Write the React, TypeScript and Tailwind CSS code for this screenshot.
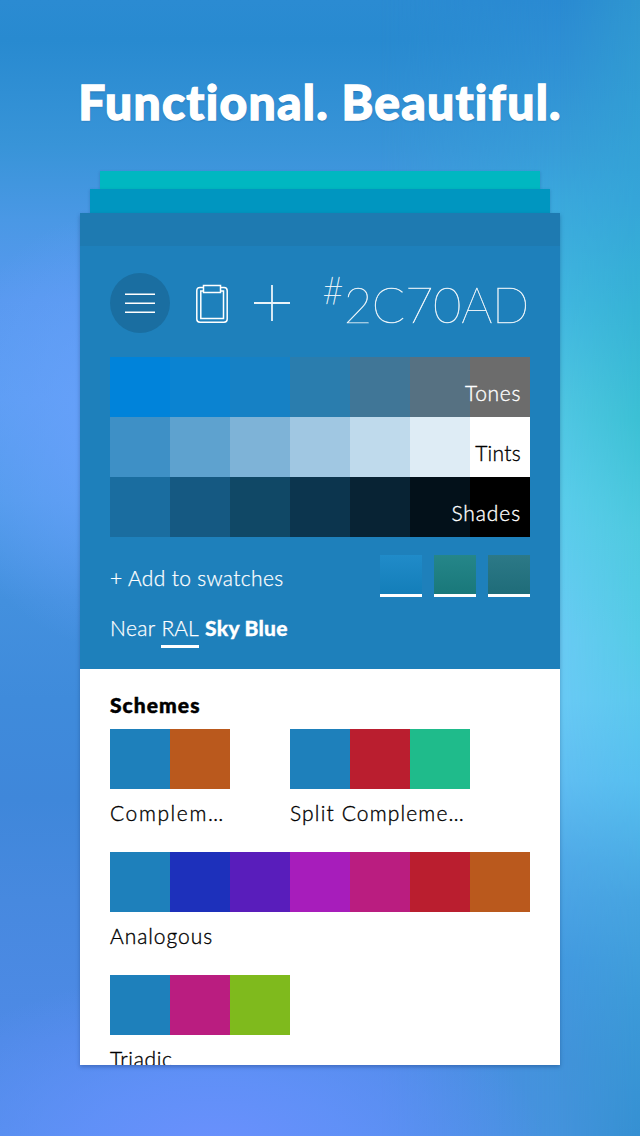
import type { ReactNode } from "react";

const tones = ["bg-[#0083da]", "bg-[#0b83d1]", "bg-[#1681c5]", "bg-[#2a7dae]", "bg-[#407697]", "bg-[#567182]", "bg-[#6c6c6c]"];
const tints = ["bg-[#3e90c6]", "bg-[#5ea2cf]", "bg-[#7eb3d7]", "bg-[#a0c7e2]", "bg-[#bfdaec]", "bg-[#deecf5]", "bg-white"];
const shades = ["bg-[#1a6da0]", "bg-[#155982]", "bg-[#104866]", "bg-[#0c354e]", "bg-[#082334]", "bg-[#03111a]", "bg-black"];

function Backdrop() {
  return (
    <div className="absolute inset-0 -z-10 bg-[linear-gradient(180deg,#2b8bd2_0px,#288ad0_40px,#3894d8_145px,#4a98e5_220px,#5899ef_300px,#5b9df2_400px,#519bea_500px,#4390de_600px,#3f8bdb_700px,#3f87da_800px,#4789df_900px,#4e8ae6_1040px,#4f8de8_1136px)]">
      <div className="absolute inset-0 bg-[radial-gradient(180px_220px_at_120px_430px,#68a1fb_0%,transparent_100%)]" />
      <div className="absolute inset-0 bg-[linear-gradient(180deg,#2a8ad2_0px,#2f90d4_60px,#379dd8_150px,#3aa8dc_200px,#40b6df_300px,#4ec5e2_400px,#5acdeb_500px,#69cbf4_640px,#69caf5_700px,#60bef2_780px,#50aae8_860px,#439ae0_960px,#4293da_1060px,#4493dc_1136px)] [mask-image:linear-gradient(90deg,transparent_380px,black_560px)]" />
      <div className="absolute inset-0 bg-[linear-gradient(180deg,#2f96d0_0px,#35a5d8_200px,#36b3d5_310px,#3cc0d4_420px,#4ec9df_530px,#55cbe6_640px,#5bc8ed_700px,#57bfef_780px,#46a4e0_900px,#3c9ad8_1000px,#3590d2_1136px)] [mask-image:linear-gradient(90deg,transparent_560px,black_640px)]" />
      <div className="absolute inset-0 bg-[radial-gradient(330px_180px_at_215px_1150px,#6a90fd_0%,#6491fbcc_40%,transparent_100%)]" />
    </div>
  );
}

function Strip({ colors }: { colors: string[] }) {
  return (
    <div className="flex h-15">
      {colors.map((c) => (
        <div key={c} className={`h-15 w-15 ${c}`} />
      ))}
    </div>
  );
}

function Ramp({ colors, label, text }: { colors: string[]; label: string; text: string }) {
  return (
    <div className="relative">
      <Strip colors={colors} />
      <span className={`absolute top-[22px] right-[9px] text-[21px] leading-7 font-light ${text}`}>{label}</span>
    </div>
  );
}

function Scheme({ colors, children, spacing }: { colors: string[]; children: ReactNode; spacing: string }) {
  return (
    <div className="h-[123px]">
      <Strip colors={colors} />
      <p className={`mt-[10px] whitespace-nowrap text-[21px] leading-7 font-light text-black [-webkit-text-stroke:0.35px_black] ${spacing}`}>{children}</p>
    </div>
  );
}

export default function App() {
  return (
    <main className="relative isolate flex h-[1136px] w-[640px] flex-col items-center overflow-hidden font-['Lato','Noto_Sans',sans-serif]">
      <Backdrop />
      <h1 className="mt-[72px] h-[99px] whitespace-nowrap text-[48px] leading-[60px] font-black tracking-[1.25px] text-white [-webkit-text-stroke:1.3px_white] [text-shadow:0_1px_2px_rgba(0,40,90,0.35)]">
        Functional. Beautiful.
      </h1>
      <div className="h-[18px] w-[440px] bg-[#00b7c1] shadow-[0_1px_3px_rgba(0,30,80,0.2)]" />
      <div className="h-6 w-[460px] bg-[#0096c0] shadow-[0_1px_3px_rgba(0,30,80,0.2)]" />
      <section className="h-[852px] w-[480px] shrink-0 bg-white shadow-[0_2px_4px_rgba(0,30,80,0.3)]">
        <div className="h-full overflow-hidden">
          <div className="h-[456px] bg-[#1e80bb]">
            <div className="h-[33px] bg-[#1e7ab1]" />
            <div className="px-[30px] pt-[27px]">
              <header className="flex h-[84px] items-start">
                <button className="flex h-15 w-15 items-center justify-center rounded-full bg-[#1a6ea1]">
                  <svg width="30" height="22" viewBox="0 0 30 22" fill="none" stroke="white" strokeWidth="1.5">
                    <path d="M0 2.25h30M0 11.25h30M0 20.25h30" />
                  </svg>
                </button>
                <svg className="mt-[11px] ml-[26px]" width="32" height="40" viewBox="0 0 32 40" fill="none" stroke="white" strokeWidth="1.5">
                  <path d="M7.5 3.5H4Q.8 3.5 .8 6.7V35.3Q.8 38.2 4 38.2H28Q31.2 38.2 31.2 35.3V6.7Q31.2 3.5 28 3.5H24.5" />
                  <path d="M7.5 7H4.8V34.5H27.5V7H24.5" />
                  <path d="M7.5 1.5H24.5V8.5H7.5z" />
                </svg>
                <svg className="mt-3 ml-[26px]" width="36" height="36" viewBox="0 0 36 36" fill="none" stroke="white" strokeOpacity=".9" strokeWidth="1.8">
                  <path d="M18 0V36M0 18H36" />
                </svg>
                <div className="ml-auto flex items-start font-thin whitespace-nowrap text-white [-webkit-text-stroke:0.5px_rgba(255,255,255,0.7)]">
                  <span className="-mt-[3px] text-[37px] leading-[40px]">#</span>
                  <span className="mt-px mr-[1px] text-[49px] leading-[60px] tracking-[-0.3px]">2C70AD</span>
                </div>
              </header>
              <div>
                <Ramp colors={tones} label="Tones" text="text-white tracking-[0.65px] [-webkit-text-stroke:0.35px_white]" />
                <Ramp colors={tints} label="Tints" text="text-black tracking-[0.3px] [-webkit-text-stroke:0.35px_black]" />
                <Ramp colors={shades} label="Shades" text="text-white tracking-[0.9px] [-webkit-text-stroke:0.35px_white]" />
              </div>
              <div className="flex justify-between pt-[18px] text-[21px] leading-7 font-light text-white [-webkit-text-stroke:0.25px_white]">
                <span className="mt-[9px] tracking-[0.35px]">+ Add to swatches</span>
                <div className="flex gap-3">
                  <div className="h-[42px] w-[42px] border-b-3 border-white bg-linear-to-b from-[#208bc9] to-[#137eb9]" />
                  <div className="h-[42px] w-[42px] border-b-3 border-white bg-linear-to-b from-[#258689] to-[#19787a]" />
                  <div className="h-[42px] w-[42px] border-b-3 border-white bg-linear-to-b from-[#2c7987] to-[#1f6c79]" />
                </div>
              </div>
              <p className="mt-[17px] flex text-[21px] leading-7 font-light text-white [-webkit-text-stroke:0.25px_white]">
                <span className="w-[51px] tracking-[0.4px]">Near</span>
                <span className="h-[34px] w-[38px] border-b-3 border-white text-center">RAL</span>
                <strong className="ml-[6px] font-black tracking-[0.25px] [-webkit-text-stroke:0.3px_white]">Sky Blue</strong>
              </p>
            </div>
          </div>
          <div className="px-[30px] pt-[22px]">
            <h2 className="mb-[10px] text-[21px] leading-7 font-black tracking-[1.05px] text-black [-webkit-text-stroke:0.5px_black]">Schemes</h2>
            <div className="flex gap-15">
              <div className="w-30">
                <Scheme colors={["bg-[#1e80bb]", "bg-[#ba591d]"]} spacing="tracking-[1.6px]">Complem…</Scheme>
              </div>
              <Scheme colors={["bg-[#1e80bb]", "bg-[#ba1e2f]", "bg-[#1fbb8b]"]} spacing="tracking-[1.15px]">Split Compleme…</Scheme>
            </div>
            <Scheme
              colors={["bg-[#1e80bb]", "bg-[#1d30bb]", "bg-[#591dbb]", "bg-[#a71dbb]", "bg-[#ba1d80]", "bg-[#ba1e2f]", "bg-[#ba591d]"]}
              spacing="tracking-[0.95px]"
            >
              Analogous
            </Scheme>
            <Scheme colors={["bg-[#1e80bb]", "bg-[#ba1d80]", "bg-[#7fba1d]"]} spacing="tracking-[0.65px]">Triadic</Scheme>
          </div>
        </div>
      </section>
    </main>
  );
}
